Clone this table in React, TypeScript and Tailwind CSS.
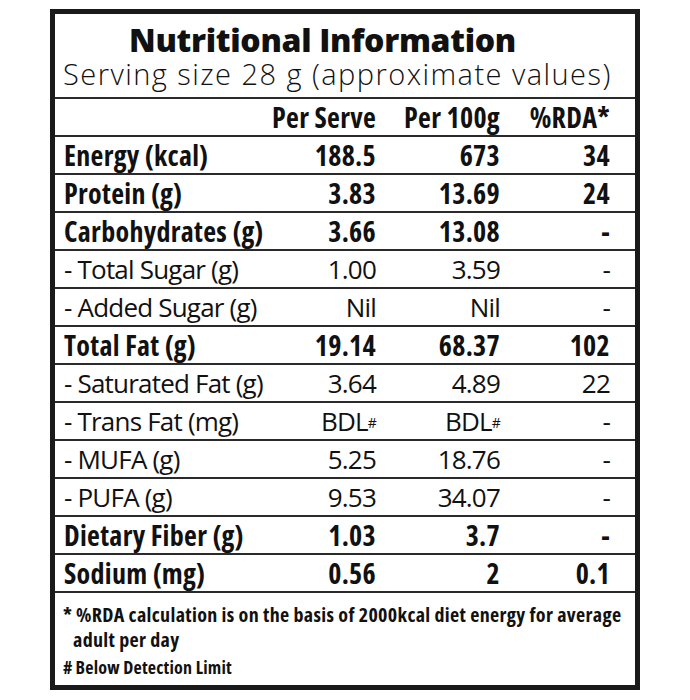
import React from 'react';

interface Row {
  label: string;
  serve: React.ReactNode;
  per100: React.ReactNode;
  rda: string;
  bold?: boolean;
}

const bdl = (
  <span>
    BDL<sup className="text-[14px] relative -top-[3px]">#</sup>
  </span>
);

const rows: Row[] = [
  { label: 'Energy (kcal)', serve: '188.5', per100: '673', rda: '34', bold: true },
  { label: 'Protein (g)', serve: '3.83', per100: '13.69', rda: '24', bold: true },
  { label: 'Carbohydrates (g)', serve: '3.66', per100: '13.08', rda: '-', bold: true },
  { label: '- Total Sugar (g)', serve: '1.00', per100: '3.59', rda: '-' },
  { label: '- Added Sugar (g)', serve: 'Nil', per100: 'Nil', rda: '-' },
  { label: 'Total Fat (g)', serve: '19.14', per100: '68.37', rda: '102', bold: true },
  { label: '- Saturated Fat (g)', serve: '3.64', per100: '4.89', rda: '22' },
  { label: '- Trans Fat (mg)', serve: bdl, per100: bdl, rda: '-' },
  { label: '- MUFA (g)', serve: '5.25', per100: '18.76', rda: '-' },
  { label: '- PUFA (g)', serve: '9.53', per100: '34.07', rda: '-' },
  { label: 'Dietary Fiber (g)', serve: '1.03', per100: '3.7', rda: '-', bold: true },
  { label: 'Sodium (mg)', serve: '0.56', per100: '2', rda: '0.1', bold: true },
];

const sans = "font-['Open_Sans',sans-serif]";
const boldCell = 'font-bold text-[28px] tracking-[0.3px] font-stretch-condensed';
const lightCell = 'font-normal text-[26px] tracking-[-0.8px] [font-stretch:88%]';
const cols = 'grid grid-cols-[minmax(0,1fr)_130px_124px_110px] items-center pl-[9px] pr-[25px]';

export default function App() {
  return (
    <div className="w-[690px] h-[700px] bg-white pt-[9px] pl-[50px]">
      <div className={`w-[590px] h-[681px] border-[5px] border-[#1a1a1a] text-[#111] flex flex-col ${sans}`}>
        <div className="h-[85px] border-b-2 border-[#2a2a2a] flex flex-col items-start">
          <div className="font-extrabold text-[32px] leading-none mt-[10px] ml-[74px] tracking-[-0.3px]">
            Nutritional Information
          </div>
          <div className="font-light text-[29px] leading-none mt-[3px] ml-[8px] tracking-[1.45px]">
            Serving size 28 g (approximate values)
          </div>
        </div>

        <div className={`h-[38px] border-b-2 border-[#2a2a2a] leading-none ${cols} ${boldCell}`}>
          <div />
          <div className="text-right">Per Serve</div>
          <div className="text-right">Per 100g</div>
          <div className="text-right">%RDA*</div>
        </div>

        {rows.map((r) => (
          <div
            key={r.label}
            className={`h-[38px] border-b-2 border-[#2a2a2a] leading-none ${cols} ${r.bold ? boldCell : lightCell}`}
          >
            <div className="whitespace-nowrap">{r.label}</div>
            <div className="text-right">{r.serve}</div>
            <div className="text-right">{r.per100}</div>
            <div className="text-right">{r.rda}</div>
          </div>
        ))}

        <div className="flex-1 pl-[8px] pr-[4px] pt-[9px] text-[20px] font-bold leading-[25px] tracking-[0.35px] font-stretch-condensed">
          <div className="whitespace-nowrap">*&thinsp;%RDA calculation is on the basis of 2000kcal diet energy for average</div>
          <div className="pl-[10px]">adult per day</div>
          <div className="mt-[3px] text-[18px] tracking-[0.2px]">#&thinsp;Below Detection Limit</div>
        </div>
      </div>
    </div>
  );
}
